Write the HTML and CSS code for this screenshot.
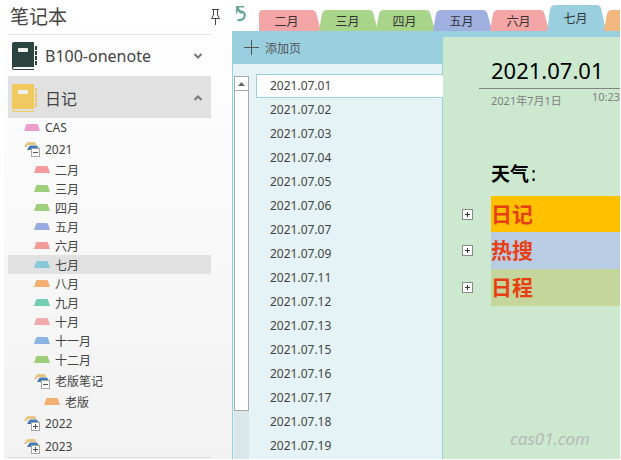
FILE: index.html
```
<!DOCTYPE html>
<html lang="zh-CN">
<head>
    <meta charset="UTF-8">
    <meta name="viewport" content="width=device-width, initial-scale=1.0">
    <title>笔记本</title>
    <link rel="stylesheet" href="styles.css">
</head>
<body>
    <svg class="defs" width="0" height="0" aria-hidden="true">
        <symbol id="section" viewBox="0 0 16 7">
            <path d="M0 7 L2 1 Q2.400 0 3.500 0 H12.500 Q13.600 0 14 1 L16 7 Z" fill="currentColor"/>
        </symbol>
        <symbol id="group-open" viewBox="0 0 16 15">
            <path d="M0 5 L2 1.500 Q3 0 4 0 H10 Q11.500 0 12 2 L12.500 3 H5 Q3.500 3 2.500 5 Z" fill="#e9c583"/>
            <path d="M3 8 L5 4.500 Q5.500 3.500 7 3.500 H12 Q13.500 3.500 14 5 L14.500 6 H7 V8 Z" fill="#4479b5"/>
            <rect x="7.500" y="6.500" width="8" height="8" fill="#fff" stroke="#a6a6a6"/>
            <path d="M9 10.500 H14" stroke="#555"/>
        </symbol>
        <symbol id="group-closed" viewBox="0 0 16 15">
            <use href="#group-open"/>
            <path d="M11.500 8 V13" stroke="#555"/>
        </symbol>
        <symbol id="book" viewBox="0 0 25 28">
            <path d="M2 0 H22 V25 H2 Q1.200 25 1.200 26 Q1.200 27 2 27 H22 V28 H2 Q0 28 0 26 V2 Q0 0 2 0 Z" fill="currentColor"/>
            <rect class="book-label" x="6" y="6" width="10" height="4" rx="1"/>
            <path d="M24 4 V8 M24 9 V13 M24 14 V18 M24 19 V23" stroke="currentColor" stroke-width="2"/>
        </symbol>
        <symbol id="tab" viewBox="0 0 59 21" preserveAspectRatio="none">
            <path d="M0 21 L3 4 Q4 0 8 0 H50 Q53.500 0 54.500 4 L59 21 Z" fill="currentColor"/>
        </symbol>
        <symbol id="tab-first" viewBox="0 0 62 21" preserveAspectRatio="none">
            <path d="M0 21 V4 Q0 0 4 0 H53 Q56.500 0 57.500 4 L62 21 Z" fill="currentColor"/>
        </symbol>
        <symbol id="expand" viewBox="0 0 11 11">
            <rect x="0.500" y="0.500" width="10" height="10" fill="#fff" stroke="#8a8a8a"/>
            <path d="M3 5.500 H8 M5.500 3 V8" stroke="#333"/>
        </symbol>
    </svg>

    <div class="app">
        <nav class="sidebar">
            <header class="sidebar-header">
                <h1>笔记本</h1>
                <button class="pin" aria-label="固定">
                    <svg width="9" height="16" viewBox="0 0 9 16"><path d="M1 0.500 H8 M2.500 0.500 V6 L0.500 9.500 H8.500 L6.500 6 V0.500 M4.500 9.500 V16" fill="none" stroke="#444"/></svg>
                </button>
            </header>

            <button class="notebook">
                <svg class="book green" width="25" height="28"><use href="#book"/></svg>
                <span>B100-onenote</span>
                <svg class="chevron" width="8" height="6" viewBox="0 0 8 6"><path d="M0.500 1 L4 4.500 L7.500 1" fill="none" stroke="#777" stroke-width="2"/></svg>
            </button>
            <button class="notebook open">
                <svg class="book yellow" width="25" height="28"><use href="#book"/></svg>
                <span>日记</span>
                <svg class="chevron" width="8" height="6" viewBox="0 0 8 6"><path d="M0.500 5 L4 1.500 L7.500 5" fill="none" stroke="#777" stroke-width="2"/></svg>
            </button>

            <ul class="tree">
                <li><a href="#" class="section"><svg class="pink"><use href="#section"/></svg>CAS</a></li>
                <li>
                    <button class="group"><svg><use href="#group-open"/></svg>2021</button>
                    <ul>
                        <li><a href="#" class="section"><svg class="red"><use href="#section"/></svg>二月</a></li>
                        <li><a href="#" class="section"><svg class="lime"><use href="#section"/></svg>三月</a></li>
                        <li><a href="#" class="section"><svg class="lime"><use href="#section"/></svg>四月</a></li>
                        <li><a href="#" class="section"><svg class="violet"><use href="#section"/></svg>五月</a></li>
                        <li><a href="#" class="section"><svg class="red"><use href="#section"/></svg>六月</a></li>
                        <li><a href="#" class="section current"><svg class="cyan"><use href="#section"/></svg>七月</a></li>
                        <li><a href="#" class="section"><svg class="orange"><use href="#section"/></svg>八月</a></li>
                        <li><a href="#" class="section"><svg class="teal"><use href="#section"/></svg>九月</a></li>
                        <li><a href="#" class="section"><svg class="rose"><use href="#section"/></svg>十月</a></li>
                        <li><a href="#" class="section"><svg class="blue"><use href="#section"/></svg>十一月</a></li>
                        <li><a href="#" class="section"><svg class="lime"><use href="#section"/></svg>十二月</a></li>
                        <li>
                            <button class="group"><svg><use href="#group-open"/></svg>老版笔记</button>
                            <ul>
                                <li><a href="#" class="section"><svg class="orange"><use href="#section"/></svg>老版</a></li>
                            </ul>
                        </li>
                    </ul>
                </li>
                <li><button class="group"><svg><use href="#group-closed"/></svg>2022</button></li>
                <li><button class="group"><svg><use href="#group-closed"/></svg>2023</button></li>
            </ul>
        </nav>

        <div class="workspace">
            <div class="tabs">
                <button class="undo" aria-label="返回">
                    <svg width="11" height="16" viewBox="0 0 11 16"><path d="M1.500 14 C6 14.800 8.700 12.500 8.700 9.500 C8.700 7 7 5.500 4.500 5.500" fill="none" stroke="#64a893" stroke-width="2.200"/><path d="M0.500 7.500 V0.800 H8" fill="none" stroke="#64a893" stroke-width="1.600"/><path d="M0 0 H4 L2.500 2 L7 6.500 L5 8 L0 4 Z" fill="#64a893"/></svg>
                </button>
                <button class="tab first"><svg class="tab-red"><use href="#tab-first"/></svg><span>二月</span></button>
                <button class="tab"><svg class="tab-lime"><use href="#tab"/></svg><span>三月</span></button>
                <button class="tab"><svg class="tab-lime"><use href="#tab"/></svg><span>四月</span></button>
                <button class="tab"><svg class="tab-violet"><use href="#tab"/></svg><span>五月</span></button>
                <button class="tab"><svg class="tab-red"><use href="#tab"/></svg><span>六月</span></button>
                <button class="tab active"><svg class="tab-cyan"><use href="#tab"/></svg><span>七月</span></button>
                <button class="tab"><svg class="tab-orange"><use href="#tab"/></svg><span>八月</span></button>
            </div>

            <div class="content">
                <aside class="pages">
                    <button class="add-page">
                        <svg width="15" height="15" viewBox="0 0 15 15"><path d="M0 7.500 H15 M7.500 0 V15" stroke="#555"/></svg>
                        添加页
                    </button>
                    <div class="pages-body">
                        <div class="scrollbar">
                            <button class="scroll-up" aria-label="向上滚动">
                                <svg width="7" height="4" viewBox="0 0 7 4"><path d="M0 4 L3.500 0 L7 4 Z" fill="#666"/></svg>
                            </button>
                            <div class="track">
                                <div class="thumb"></div>
                            </div>
                        </div>
                        <ul class="page-list">
                            <li><a href="#" class="selected">2021.07.01</a></li>
                            <li><a href="#">2021.07.02</a></li>
                            <li><a href="#">2021.07.03</a></li>
                            <li><a href="#">2021.07.04</a></li>
                            <li><a href="#">2021.07.05</a></li>
                            <li><a href="#">2021.07.06</a></li>
                            <li><a href="#">2021.07.07</a></li>
                            <li><a href="#">2021.07.09</a></li>
                            <li><a href="#">2021.07.11</a></li>
                            <li><a href="#">2021.07.12</a></li>
                            <li><a href="#">2021.07.13</a></li>
                            <li><a href="#">2021.07.15</a></li>
                            <li><a href="#">2021.07.16</a></li>
                            <li><a href="#">2021.07.17</a></li>
                            <li><a href="#">2021.07.18</a></li>
                            <li><a href="#">2021.07.19</a></li>
                        </ul>
                    </div>
                </aside>

                <main class="note">
                    <header class="note-header">
                        <h2>2021.07.01</h2>
                        <div class="note-meta">
                            <span class="date">2021年7月1日</span>
                            <span class="time">10:23</span>
                        </div>
                    </header>
                    <p class="weather">天气<span>:</span></p>
                    <div class="outline">
                        <button aria-label="展开日记"><svg width="11" height="11"><use href="#expand"/></svg></button>
                        <h3 class="gold">日记</h3>
                    </div>
                    <div class="outline">
                        <button aria-label="展开热搜"><svg width="11" height="11"><use href="#expand"/></svg></button>
                        <h3 class="sky">热搜</h3>
                    </div>
                    <div class="outline">
                        <button aria-label="展开日程"><svg width="11" height="11"><use href="#expand"/></svg></button>
                        <h3 class="olive">日程</h3>
                    </div>
                    <p class="watermark">cas01.com</p>
                </main>
            </div>
        </div>
    </div>
</body>
</html>
```
FILE: styles.css
```
* {
    box-sizing: border-box;
}
body {
    margin: 0;
    font-family: "Noto Sans", "Noto Sans CJK SC", sans-serif;
    font-size: 12px;
    color: #444;
    background: #fff;
}
h1, h2, h3, p, ul {
    margin: 0;
    padding: 0;
    font-weight: normal;
}
ul {
    list-style: none;
}
a {
    color: inherit;
    text-decoration: none;
}
button {
    padding: 0;
    border: none;
    background: none;
    font: inherit;
    color: inherit;
    text-align: left;
    cursor: pointer;
}
svg {
    display: block;
    flex: none;
}
.defs {
    position: absolute;
}
.app {
    display: flex;
    height: 100vh;
    padding: 0 1px 1px 0;
    overflow: hidden;
}

/* notebooks */
.sidebar {
    flex: none;
    width: 228px;
    margin-left: 4px;
    padding: 0 21px 0 4px;
    background: linear-gradient(#fff, #f2f2f2);
}
.sidebar-header {
    display: flex;
    align-items: center;
    justify-content: space-between;
    height: 34px;
    margin-right: -9px;
    padding-left: 2px;
}
.sidebar-header h1 {
    font-size: 19px;
    line-height: 34px;
}
.notebook {
    display: flex;
    align-items: center;
    gap: 8px;
    width: 100%;
    height: 42px;
    padding: 0 9px 0 4px;
    font-size: 16px;
    border-top: 1px solid #e1e1e1;
}
.notebook.open {
    background: #e1e1e1;
}
.notebook .chevron {
    margin-left: auto;
}
.book.green {
    color: #2b443f;
}
.book.yellow {
    color: #f0ca60;
}
.book-label {
    fill: #f0f0f0;
}
.tree {
    border-bottom: 1px solid #dcdcdc;
}
.section, .group {
    display: flex;
    align-items: center;
    gap: 5px;
    width: 100%;
    height: 19px;
    padding-left: 16px;
}
.group {
    height: 23px;
    padding-top: 1px;
}
.section svg {
    width: 16px;
    height: 7px;
}
.group svg {
    width: 16px;
    height: 15px;
}
.tree ul .section, .tree ul .group {
    padding-left: 26px;
}
.tree ul ul .section {
    padding-left: 36px;
}
.section.current {
    background: #e1e1e1;
}
.pink { color: #ed9fca; }
.red { color: #f49a9a; }
.lime { color: #9dcf7a; }
.violet { color: #97abdf; }
.cyan { color: #87c8d9; }
.orange { color: #f3b072; }
.teal { color: #75ccb4; }
.rose { color: #f1aaab; }
.blue { color: #8ab4e1; }

/* section tabs */
.workspace {
    display: flex;
    flex: 1;
    flex-direction: column;
    min-width: 0;
}
.tabs {
    display: flex;
    align-items: flex-end;
    height: 31px;
    overflow: hidden;
}
.undo {
    flex: none;
    width: 27px;
    height: 31px;
    padding: 0 0 4px 4px;
}
.tab {
    position: relative;
    flex: none;
    width: 57px;
    height: 21px;
    color: #333;
    text-align: center;
}
.tab.first {
    width: 60px;
    padding-right: 5px;
}
.tab.active {
    height: 26px;
}
.tab svg {
    position: absolute;
    top: 0;
    left: 0;
    width: calc(100% + 2px);
    height: 100%;
}
.tab span {
    position: relative;
}
.tab-red { color: #f4a6a6; }
.tab-lime { color: #a9d58a; }
.tab-violet { color: #a0b1e1; }
.tab-cyan { color: #99cfdf; }
.tab-orange { color: #f2b77f; }

/* page list */
.content {
    display: flex;
    flex: 1;
    min-height: 0;
    border-left: 1px solid #99cfdf;
}
.pages {
    display: flex;
    flex: none;
    flex-direction: column;
    width: 210px;
    background: #e5f2f6;
}
.add-page {
    display: flex;
    flex: none;
    align-items: center;
    gap: 6px;
    height: 33px;
    padding-left: 11px;
    color: #555;
    background: #99cfdf;
}
.pages-body {
    display: flex;
    flex: 1;
    gap: 7px;
    min-height: 0;
    padding: 10px 0 0 1px;
    border-right: 1px solid #99cfdf;
}
.scrollbar {
    display: flex;
    flex: none;
    flex-direction: column;
    width: 15px;
    margin-top: 2px;
}
.scroll-up {
    display: flex;
    flex: none;
    align-items: center;
    justify-content: center;
    height: 15px;
    border: 1px solid #ababab;
    background: #fff;
}
.track {
    flex: 1;
    background: #d9e6ea;
}
.thumb {
    height: 87%;
    border: 1px solid #ababab;
    border-top: none;
    background: #fff;
}
.page-list {
    flex: 1;
    margin-right: -1px;
    overflow: hidden;
}
.page-list a {
    display: block;
    height: 24px;
    padding-left: 14px;
    line-height: 24px;
}
.page-list .selected {
    box-shadow: inset 1px 1px #99cfdf, inset 0 -1px #99cfdf;
    background: #fff;
}

/* page */
.note {
    display: flex;
    flex: 1;
    flex-direction: column;
    min-width: 0;
    overflow: hidden;
    border-top: 6px solid #99cfdf;
    background: #cce8cf;
}
.note-header {
    margin-left: 36px;
    padding-top: 18px;
}
.note-header h2 {
    padding: 0 0 3px 12px;
    border-bottom: 1px solid #858585;
    font-size: 22px;
    line-height: 30px;
    color: #000;
}
.note-meta {
    display: flex;
    justify-content: space-between;
    padding-left: 12px;
    font-size: 11px;
    color: #808080;
    white-space: nowrap;
}
.note-meta .date {
    line-height: 24px;
}
.note-meta .time {
    line-height: 16px;
}
.weather {
    margin: 45px 0 6px 48px;
    font-size: 19px;
    font-weight: bold;
    line-height: 32px;
    color: #000;
}
.weather span {
    padding-left: 2px;
    font-weight: normal;
}
.outline {
    display: flex;
    align-items: center;
    gap: 18px;
    padding-left: 19px;
}
.outline h3 {
    flex: 1;
    font-size: 21px;
    font-weight: bold;
    line-height: 37px;
    color: #e83f12;
}
.outline .gold {
    line-height: 36px;
}
.gold { background: #ffc000; }
.sky { background: #b8cce4; }
.olive { background: #c4d69b; }
.watermark {
    margin: auto 30px 8px auto;
    font-size: 17px;
    font-style: italic;
    line-height: 24px;
    color: #b9b9b9;
}
```
